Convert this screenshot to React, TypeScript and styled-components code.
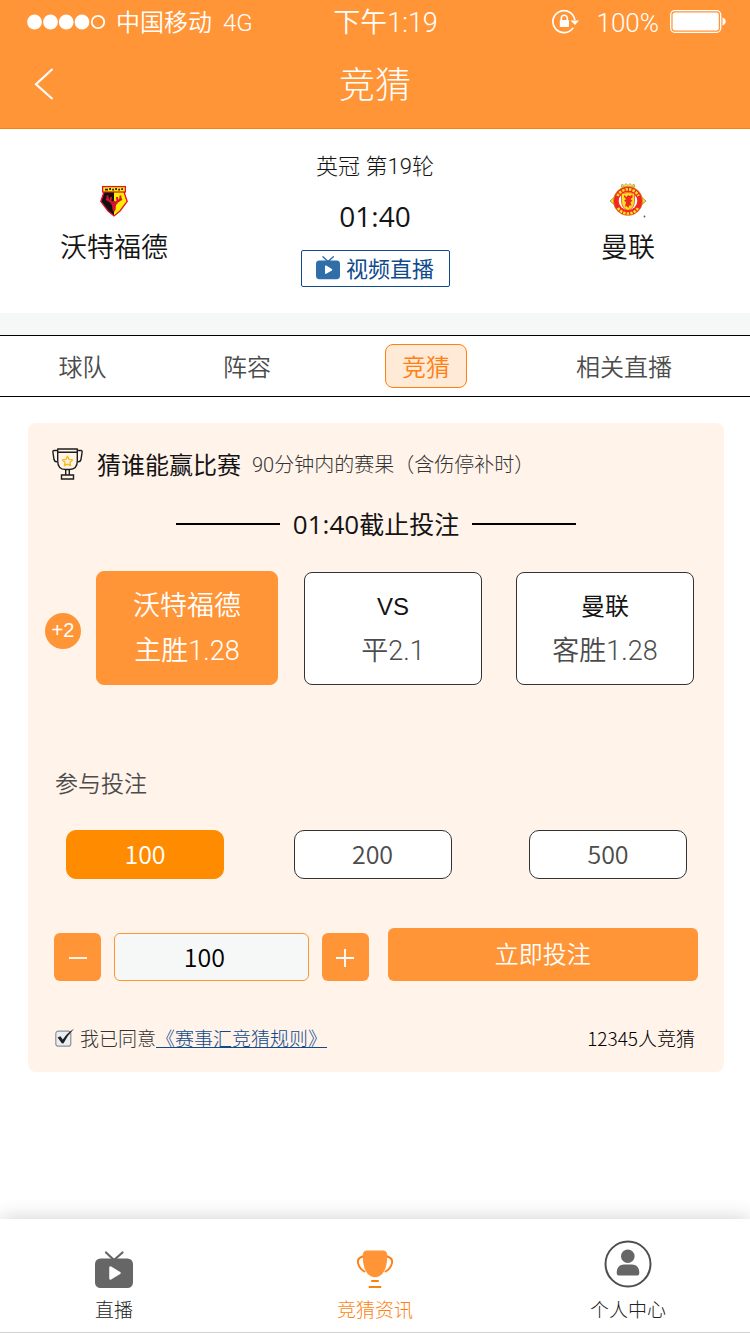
import React, { useState } from 'react';
import styled, { createGlobalStyle } from 'styled-components';

const cjk = '"Noto Sans CJK SC", sans-serif';
const sans = `"Liberation Sans", ${cjk}`;
const thin = `Roboto, ${cjk}`;
const humanist = `"Open Sans", ${cjk}`;

const orange = '#ff9536';
const orangeDeep = '#ff7f10';
const ink = '#141414';
const grey = '#4c4c4c';
const blue = '#0f4a8c';

const GlobalStyle = createGlobalStyle`
  * { box-sizing: border-box; }
  body { margin: 0; background: #fff; color: ${ink}; font-family: ${cjk}; font-weight: 300; }
  button, input { font: inherit; color: inherit; margin: 0; padding: 0; }
  button { cursor: pointer; border: 0; background: none; }
  h1, h2, p { margin: 0; font-weight: inherit; }
  svg { display: block; flex: none; }
`;

const Page = styled.div`
  min-height: 100vh;
  display: flex;
  flex-direction: column;
`;

const Header = styled.header`
  background: ${orange};
  border-bottom: 1px solid ${orangeDeep};
  color: #fff;
`;

const StatusBar = styled.div`
  height: 44px;
  padding: 0 24px 0 27px;
  display: grid;
  grid-template-columns: 304fr auto 286fr;
  align-items: center;
  font-family: ${thin};
  font-size: 24px;
  font-weight: 350;
  line-height: 44px;
`;

const StatusGroup = styled.div<{ $end?: boolean }>`
  display: flex;
  align-items: center;
  justify-content: ${p => (p.$end ? 'flex-end' : 'flex-start')};
  gap: 11px;
`;

const StatusText = styled.span`
  padding-top: 2px;
  font-size: 27px;
  line-height: 42px;
`;

const Carrier = styled.span`
  padding-top: 2px;
  line-height: 42px;
`;

const Level = styled.span`
  padding: 2px 0 0 6px;
  font-size: 26px;
  line-height: 42px;
`;

const NavBar = styled.div`
  height: 84px;
  padding: 0 34px 4px;
  display: grid;
  grid-template-columns: 40px 1fr 40px;
  align-items: center;
`;

const BackButton = styled.button`
  height: 44px;
  display: flex;
  align-items: center;
`;

const Title = styled.h1`
  padding-bottom: 4px;
  font-size: 36px;
  line-height: 48px;
  text-align: center;
`;

const Match = styled.section`
  height: 184px;
  padding-right: 16px;
  display: grid;
  grid-template-columns: 228fr 294fr 212fr;
`;

const Team = styled.div`
  display: flex;
  flex-direction: column;
  align-items: center;
  padding-top: 54px;
  font-size: 27px;
  font-weight: 350;
  line-height: 36px;
  gap: 9px;
`;

const Crest = styled.div`
  height: 36px;
  display: flex;
  align-items: center;
`;

const MatchInfo = styled.div`
  display: flex;
  flex-direction: column;
  align-items: center;
  padding-top: 22px;
`;

const Round = styled.p`
  font-family: ${thin};
  font-size: 22px;
  line-height: 32px;
`;

const Kickoff = styled.p`
  margin: 16px 0;
  font-family: ${humanist};
  font-size: 28px;
  font-weight: 400;
  line-height: 35px;
`;

const LiveButton = styled.button`
  width: 149px;
  height: 37px;
  padding-bottom: 3px;
  display: flex;
  align-items: center;
  justify-content: center;
  gap: 6px;
  border: 1px solid ${blue};
  border-radius: 2px;
  color: ${blue};
  font-size: 22px;
  font-weight: 400;
  line-height: 32px;
`;

const Tabs = styled.nav`
  height: 84px;
  padding-right: 25px;
  border-top: 22px solid #f6f8f8;
  border-bottom: 1px solid #000;
  box-shadow: inset 0 1px 0 #000;
  display: grid;
  grid-template-columns: 165fr 164fr 194fr 202fr;
  align-items: center;
  justify-items: center;
`;

const Tab = styled.button<{ $active?: boolean }>`
  height: 44px;
  padding: 0 16px;
  border: 1px solid ${p => (p.$active ? orangeDeep : 'transparent')};
  border-radius: 8px;
  background: ${p => (p.$active ? '#ffe9d7' : 'transparent')};
  color: ${p => (p.$active ? orangeDeep : grey)};
  font-size: 24px;
  font-weight: 350;
  line-height: 42px;
  white-space: nowrap;
`;

const Card = styled.main`
  margin: 26px 26px 146px 28px;
  padding-bottom: 19px;
  border-radius: 8px;
  background: #fff3ea;
`;

const CardHeading = styled.div`
  padding: 22px 24px 0;
  display: flex;
  align-items: center;
  line-height: 38px;
`;

const Question = styled.h2`
  margin: 0 11px 0 14px;
  font-size: 24px;
  font-weight: 400;
`;

const Note = styled.p`
  padding-top: 2px;
  color: #333;
  font-family: ${thin};
  font-size: 20px;
  line-height: 36px;
`;

const Deadline = styled.p`
  margin-top: 21px;
  display: flex;
  align-items: center;
  justify-content: center;
  font-size: 25px;
  font-weight: 400;
  line-height: 38px;

  &::before,
  &::after {
    content: '';
    width: 104px;
    height: 2px;
    margin: 0 13px;
    background: #000;
  }
`;

const Clock = styled.time`
  font-family: ${humanist};
  font-size: 26px;
`;

const Outcomes = styled.div`
  margin: 28px 30px 0 17px;
  display: flex;
  align-items: flex-end;
  gap: 15px;
`;

const Bonus = styled.span`
  width: 36px;
  height: 36px;
  margin-bottom: 36px;
  border-radius: 50%;
  background: ${orange};
  color: #fff;
  font-family: ${sans};
  font-size: 20px;
  line-height: 34px;
  text-align: center;
`;

const OutcomeGrid = styled.div`
  flex: 1;
  display: grid;
  grid-template-columns: 208fr 212fr 178fr;
  align-items: center;
`;

const Outcome = styled.button<{ $selected: boolean }>`
  width: ${p => (p.$selected ? 182 : 178)}px;
  height: ${p => (p.$selected ? 114 : 113)}px;
  padding-top: 2px;
  display: flex;
  flex-direction: column;
  align-items: center;
  justify-content: center;
  border: 1px solid ${p => (p.$selected ? orange : '#333')};
  border-radius: 8px;
  background: ${p => (p.$selected ? orange : '#fff')};
  color: ${p => (p.$selected ? '#fff' : grey)};
  font-family: ${thin};
  font-size: 27px;
  font-weight: 350;
  line-height: 45px;
`;

const OutcomeName = styled.span<{ $selected: boolean }>`
  color: ${p => (p.$selected ? '#fff' : ink)};
  font-family: ${sans};
  font-size: ${p => (p.$selected ? 27 : 24)}px;
  font-weight: ${p => (p.$selected ? 350 : 400)};
`;

const StakeLabel = styled.p`
  margin: 79px 0 0 27px;
  color: ${grey};
  font-size: 23px;
  font-weight: 350;
  line-height: 36px;
`;

const Stakes = styled.div`
  margin: 30px 37px 0 38px;
  display: grid;
  grid-template-columns: 228fr 236fr 158fr;
`;

const Stake = styled.button<{ $selected: boolean }>`
  width: 158px;
  height: 49px;
  padding-bottom: 3px;
  border: 1px solid ${p => (p.$selected ? '#ff8c00' : '#333')};
  border-radius: 10px;
  background: ${p => (p.$selected ? '#ff8c00' : '#fff')};
  color: ${p => (p.$selected ? '#fff' : grey)};
  font-size: 25px;
  font-weight: 350;
  line-height: 44px;
`;

const BetRow = styled.div`
  margin: 49px 26px 0;
  display: grid;
  grid-template-columns: 47px 195fr 47px 317fr;
  column-gap: 13px;
  align-items: end;
`;

const StepButton = styled.button`
  height: 48px;
  display: flex;
  align-items: center;
  justify-content: center;
  border-radius: 6px;
  background: ${orange};
`;

const Amount = styled.input`
  width: 100%;
  min-width: 0;
  height: 48px;
  padding: 0 14px 2px 0;
  border: 1px solid ${orange};
  border-radius: 6px;
  background: #f6f8f8;
  color: #000;
  font-size: 25px;
  font-weight: 350;
  text-align: center;
`;

const Submit = styled.button`
  height: 53px;
  margin-left: 6px;
  padding-bottom: 3px;
  border-radius: 6px;
  background: ${orange};
  color: #fff;
  font-size: 24px;
  font-weight: 350;
  line-height: 50px;
`;

const TermsRow = styled.div`
  margin: 42px 29px 0 27px;
  display: flex;
  align-items: center;
  justify-content: space-between;
  font-size: 19px;
  line-height: 30px;
`;

const Terms = styled.div`
  display: flex;
  align-items: center;
  color: #333;
`;

const Agree = styled.label`
  display: flex;
  align-items: center;
  gap: 5px;
`;

const Check = styled.span`
  display: grid;

  > * { grid-area: 1 / 1; }
`;

const CheckInput = styled.input`
  appearance: none;
  width: 20px;
  height: 20px;
  cursor: pointer;

  & + svg { pointer-events: none; }
  &:not(:checked) + svg .tick { display: none; }
`;

const RulesLink = styled.a`
  color: ${blue};
  text-decoration: none;
  line-height: 19px;
  border-bottom: 1px solid ${blue};
`;

const Entrants = styled.p`
  color: #000;
`;

const TabBar = styled.nav`
  height: 114px;
  margin-top: auto;
  padding-right: 16px;
  border-bottom: 1px solid #d2d2d2;
  background: #fff;
  box-shadow: 0 -2px 18px rgba(0, 0, 0, 0.16);
  display: grid;
  grid-template-columns: 228fr 294fr 212fr;
`;

const TabBarItem = styled.a<{ $active?: boolean }>`
  padding-bottom: 9px;
  display: flex;
  flex-direction: column;
  align-items: center;
  justify-content: flex-end;
  gap: 7px;
  color: ${p => (p.$active ? orangeDeep : '#222')};
  font-size: 19px;
  line-height: 28px;
  text-decoration: none;
`;

const TvIcon = ({ width, height, color }: { width: number; height: number; color: string }) => (
  <svg width={width} height={height} viewBox="0 0 38 37" aria-hidden="true">
    <path d="M11 1.5 L19 9 L27.5 1.5" fill="none" stroke={color} strokeWidth="2.2" strokeLinecap="round" />
    <rect x="0" y="7.5" width="38" height="29.5" rx="5.5" fill={color} />
    <path d="M15.5 16.5 v11 L24.5 22 Z" fill="#fff" stroke="#fff" strokeWidth="2.5" strokeLinejoin="round" />
  </svg>
);

const SignalDots = () => (
  <svg width="78" height="16" viewBox="0 0 78 16" aria-hidden="true">
    {[7.5, 23.5, 39.2, 55].map(x => (
      <circle key={x} cx={x} cy="8" r="7.4" fill="#fff" />
    ))}
    <circle cx="71" cy="8" r="6.2" fill="none" stroke="#fff" strokeWidth="1.8" />
  </svg>
);

const LockIcon = () => (
  <svg width="28" height="26" viewBox="0 0 28 26" fill="none" stroke="#fff" aria-hidden="true">
    <path d="M21.2 18.6 A11 11 0 1 1 22.8 11" strokeWidth="1.7" />
    <path d="M18.5 11.5 h8.5 l-4 4.5 Z" fill="#fff" stroke="none" />
    <path d="M9.3 12 V9.2 a3 3 0 0 1 6 0 V12" strokeWidth="1.6" />
    <rect x="7.8" y="11" width="9.2" height="7" rx="0.8" fill="#fff" stroke="none" />
  </svg>
);

const BatteryIcon = () => (
  <svg width="56" height="24" viewBox="0 0 56 24" aria-hidden="true">
    <rect x="0.7" y="0.7" width="50" height="21.6" rx="4" fill="none" stroke="#fff" strokeWidth="1.3" />
    <rect x="2.6" y="2.6" width="46.2" height="17.8" rx="2.5" fill="#fff" />
    <path d="M52.5 7.5 q3.2 1.2 3.2 4 t-3.2 4 Z" fill="#fff" />
  </svg>
);

const WatfordCrest = () => (
  <svg width="28" height="32" viewBox="0 0 28 32" aria-hidden="true">
    <path d="M4 7 H14 V31 L8 26 L0.8 16.5 Z" fill="#111" />
    <path d="M14 7 H24 L27.2 16.5 L20 26 L14 31 Z" fill="#fdf100" />
    <path d="M4 7 L0.8 16.5 L8 26 L14 31 L20 26 L27.2 16.5 L24 7" fill="none" stroke="#e3122d" strokeWidth="1.3" />
    <rect x="2.6" y="1.6" width="22.8" height="5.4" fill="#fdf100" stroke="#e3122d" strokeWidth="1.3" />
    <path d="M5 4.6 H8 M9.2 4 H11 M12.2 4.6 H14 M15.2 4 H17 M18.2 4.6 H20 M21.2 4.2 H23" fill="none" stroke="#222" strokeWidth="1.8" />
    <path d="M12 17 L14 15.5 L16 17 L18 18 L16 20 L15.5 25 L14 27 L12.5 25 L12 20 L10 18 Z" fill="#d8122c" />
    <path d="M12.5 17 Q7 17 7.5 10.5 M9.5 15.5 L6 14 M10.5 16.5 L11 12 M15.5 17 Q21 17 20.5 10.5 M18.5 15.5 L22 14 M17.5 16.5 L17 12" fill="none" stroke="#d8122c" strokeWidth="2" />
  </svg>
);

const UnitedCrest = () => (
  <svg width="38" height="36" viewBox="0 0 38 36" aria-hidden="true">
    <path d="M12 4 l1-3 2 1.5 2-2 2 2 2-2 2 2 2-1.5 1 3 Z" fill="#f4e04a" stroke="#8d8a4a" strokeWidth="0.6" />
    <path d="M1 18 l4-3.5 4 3.5 -4 3.5 Z M29 18 l4-3.5 4 3.5 -4 3.5 Z" fill="#fbe122" stroke="#8d8a4a" strokeWidth="0.8" />
    <circle cx="19" cy="18" r="14.6" fill="#f0281e" stroke="#d8a01c" strokeWidth="0.6" />
    <path d="M8.5 13 A11.6 11.6 0 0 1 29.5 13" fill="none" stroke="#fbe122" strokeWidth="2.6" strokeDasharray="2.4 1.1" />
    <path d="M9 25 A11.8 11.8 0 0 0 29 25" fill="none" stroke="#fbe122" strokeWidth="2.6" strokeDasharray="2.4 1.1" />
    <ellipse cx="19" cy="18" rx="9.3" ry="9" fill="#fff" />
    <path d="M12.5 10.5 Q19 8.5 25.5 10.5 L25.5 18 Q25.5 25 19 27.5 Q12.5 25 12.5 18 Z" fill="#fbe122" stroke="#f0281e" strokeWidth="0.7" />
    <path d="M15 12 l2.5 2 1.5-2 2 1 2.5-1.5 v3 l-2 1.5 2 2 -2 1 1 4 -2-1 -1 3 -2-2 -1.5 1 1-5 -2-1 2-2 -2-2 Z" fill="#f0281e" />
    <circle cx="35.5" cy="33.5" r="0.9" fill="#555" />
  </svg>
);

const CupIcon = () => (
  <svg width="31" height="32" viewBox="0 0 31 32" fill="none" stroke="#1d1d1d" strokeWidth="1.4" aria-hidden="true">
    <path d="M5.7 1 H25.3 V13 Q25.3 21.5 17.5 21.5 H13.5 Q5.7 21.5 5.7 13 Z" strokeLinejoin="round" />
    <path d="M6 4.3 H25 M5.7 2.5 H2 Q0.7 2.5 0.9 4 L2 11.5 Q2.6 14 5 13.7 M25.3 2.5 H29 Q30.3 2.5 30.1 4 L29 11.5 Q28.4 14 26 13.7" />
    <path d="M13.7 21.5 V26.5 M17.3 21.5 V26.5 M9.5 27 H21.5 V31 H9.5 Z" />
    <path d="M15.5 8.2 L17.1 11.4 L20.5 11.9 L18 14.3 L18.6 17.7 L15.5 16.1 L12.4 17.7 L13 14.3 L10.5 11.9 L13.9 11.4 Z" stroke="#fdbb14" strokeLinejoin="round" />
  </svg>
);

const TrophyIcon = () => (
  <svg width="36" height="38" viewBox="0 0 36 38" fill="none" stroke={orangeDeep} strokeLinecap="round" aria-hidden="true">
    <path d="M9.5 0.5 H26.5 Q30.5 1 30.3 6 Q30 22 22.5 26 Q18 28.5 13.5 26 Q6 22 5.7 6 Q5.5 1 9.5 0.5 Z" fill={orange} stroke="none" />
    <path d="M5.5 6.5 Q-0.5 8.5 1.3 14 Q2.8 19 7.5 21.5 M30.5 6.5 Q36.5 8.5 34.7 14 Q33.2 19 28.5 21.5" strokeWidth="1.9" />
    <path d="M15 31 H21 M12.5 37 H23.5" strokeWidth="2" />
  </svg>
);

const ProfileIcon = () => (
  <svg width="48" height="48" viewBox="0 0 48 48" aria-hidden="true">
    <circle cx="24" cy="24" r="22.5" fill="none" stroke="#4f4f4f" strokeWidth="2" />
    <circle cx="23.8" cy="16.3" r="6.8" fill="#666" />
    <path d="M12.7 33 Q12.7 24.8 20 24.5 H28 Q35.3 24.8 35.3 33 Q35.3 35.5 33.3 35.5 H14.7 Q12.7 35.5 12.7 33 Z" fill="#666" />
  </svg>
);

const TickBoxIcon = () => (
  <svg width="20" height="20" viewBox="0 0 20 20" aria-hidden="true">
    <rect x="0.8" y="3.2" width="15" height="15" rx="2.5" fill="#e9eef3" stroke="#8c9196" strokeWidth="1.2" />
    <path className="tick" d="M2.6 9.5 L5.4 8.2 L7.8 11.6 Q12 5 19 0.8 Q12 8 8.6 15.2 L7 15.5 Z" fill="#222" />
  </svg>
);

const outcomes = [
  { name: '沃特福德', odds: '主胜1.28' },
  { name: 'VS', odds: '平2.1' },
  { name: '曼联', odds: '客胜1.28' },
];

const stakes = [100, 200, 500];
const tabs = ['球队', '阵容', '竞猜', '相关直播'];

export default function App() {
  const [tab, setTab] = useState('竞猜');
  const [outcome, setOutcome] = useState(0);
  const [stake, setStake] = useState(100);
  const [amount, setAmount] = useState(100);

  return (
    <Page>
      <GlobalStyle />
      <Header>
        <StatusBar>
          <StatusGroup>
            <SignalDots />
            <Carrier>中国移动</Carrier>
            <Carrier>4G</Carrier>
          </StatusGroup>
          <StatusText>下午1:19</StatusText>
          <StatusGroup $end>
            <LockIcon />
            <Level>100%</Level>
            <BatteryIcon />
          </StatusGroup>
        </StatusBar>
        <NavBar>
          <BackButton aria-label="返回">
            <svg width="20" height="32" viewBox="0 0 20 32" fill="none" stroke="#fff" strokeWidth="2.2" aria-hidden="true">
              <path d="M18.5 1 L2 16.2 L18.5 31" />
            </svg>
          </BackButton>
          <Title>竞猜</Title>
        </NavBar>
      </Header>

      <Match>
        <Team><Crest><WatfordCrest /></Crest>沃特福德</Team>
        <MatchInfo>
          <Round>英冠 第19轮</Round>
          <Kickoff>01:40</Kickoff>
          <LiveButton><TvIcon width={24} height={25} color="#2f6ea8" />视频直播</LiveButton>
        </MatchInfo>
        <Team><Crest><UnitedCrest /></Crest>曼联</Team>
      </Match>

      <Tabs>
        {tabs.map(t => (
          <Tab key={t} $active={t === tab} onClick={() => setTab(t)}>{t}</Tab>
        ))}
      </Tabs>

      <Card>
        <CardHeading>
          <CupIcon />
          <Question>猜谁能赢比赛</Question>
          <Note>90分钟内的赛果（含伤停补时）</Note>
        </CardHeading>
        <Deadline><span><Clock>01:40</Clock>截止投注</span></Deadline>
        <Outcomes>
          <Bonus>+2</Bonus>
          <OutcomeGrid>
            {outcomes.map((o, i) => (
              <Outcome key={o.name} $selected={i === outcome} onClick={() => setOutcome(i)}>
                <OutcomeName $selected={i === outcome}>{o.name}</OutcomeName>
                <span>{o.odds}</span>
              </Outcome>
            ))}
          </OutcomeGrid>
        </Outcomes>

        <StakeLabel>参与投注</StakeLabel>
        <Stakes>
          {stakes.map(s => (
            <Stake key={s} $selected={s === stake} onClick={() => { setStake(s); setAmount(s); }}>{s}</Stake>
          ))}
        </Stakes>

        <BetRow>
          <StepButton aria-label="减少" onClick={() => setAmount(Math.max(0, amount - 1))}>
            <svg width="18" height="20" viewBox="0 0 18 20" stroke="#fff" strokeWidth="1.8"><path d="M0 11 H18" /></svg>
          </StepButton>
          <Amount
            aria-label="投注数量"
            inputMode="numeric"
            value={amount}
            onChange={e => setAmount(Number(e.target.value) || 0)}
          />
          <StepButton aria-label="增加" onClick={() => setAmount(amount + 1)}>
            <svg width="18" height="20" viewBox="0 0 18 20" stroke="#fff" strokeWidth="1.8"><path d="M0 11 H18 M9 2 V20" /></svg>
          </StepButton>
          <Submit>立即投注</Submit>
        </BetRow>

        <TermsRow>
          <Terms>
            <Agree>
              <Check>
                <CheckInput type="checkbox" defaultChecked />
                <TickBoxIcon />
              </Check>
              我已同意
            </Agree>
            <RulesLink href="#rules">《赛事汇竞猜规则》</RulesLink>
          </Terms>
          <Entrants>12345人竞猜</Entrants>
        </TermsRow>
      </Card>

      <TabBar>
        <TabBarItem href="#live"><TvIcon width={38} height={37} color="#666" />直播</TabBarItem>
        <TabBarItem href="#guess" $active><TrophyIcon />竞猜资讯</TabBarItem>
        <TabBarItem href="#me"><ProfileIcon />个人中心</TabBarItem>
      </TabBar>
    </Page>
  );
}
